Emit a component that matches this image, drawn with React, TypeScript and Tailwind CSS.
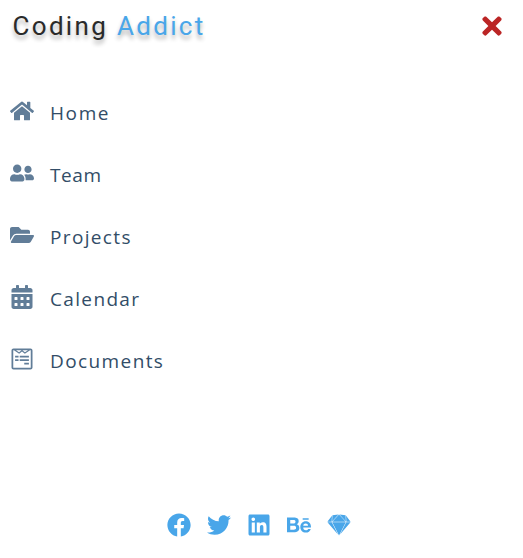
import React from 'react';
import { FaTimes, FaHome, FaUserFriends, FaFolderOpen, FaCalendarAlt, FaWpforms, FaFacebook, FaTwitter, FaLinkedin, FaBehance, FaSketch } from 'react-icons/fa';

const links = [
  { text: 'Home', icon: <FaHome />, tracking: 'tracking-[1.6px]' },
  { text: 'Team', icon: <FaUserFriends />, tracking: 'tracking-[0.6px]' },
  { text: 'Projects', icon: <FaFolderOpen />, tracking: 'tracking-[1.35px]' },
  { text: 'Calendar', icon: <FaCalendarAlt />, tracking: 'tracking-[1.35px]' },
  { text: 'Documents', icon: <FaWpforms />, tracking: 'tracking-[1.4px]' },
];
const social = [FaFacebook, FaTwitter, FaLinkedin, FaBehance, FaSketch];

export default function App() {
  return (
    <aside className="grid h-screen w-full grid-rows-[auto_1fr_auto] bg-white">
      <header className="flex h-[82px] items-start justify-between pl-[12.5px] pr-[17px] pt-[8px]">
        <h1 className="whitespace-nowrap font-[Roboto,sans-serif] text-[26px] leading-[36px] tracking-[2.32px] text-[#2a2a2a] [text-shadow:0px_4px_4px_rgba(0,0,0,0.3)]">
          Coding <span className="text-[#49a6e9]">Addict</span>
        </h1>
        <button aria-label="Close" className="mt-[4px] text-[28px] text-[#bb2525]"><FaTimes /></button>
      </header>
      <ul>
        {links.map((l) => (
          <li key={l.text} className="flex h-[62px] items-center gap-4 pl-[10px]">
            <span className="pb-1 text-[24px] text-[#617d98]">{l.icon}</span>
            <span className={`font-['Open_Sans',sans-serif] text-[19px] leading-[28px] text-[#324d67] ${l.tracking}`}>{l.text}</span>
          </li>
        ))}
      </ul>
      <ul className="flex h-[45px] justify-center gap-4 pr-[5px] text-[24px] text-[#49a6e9]">
        {social.map((Icon, i) => <li key={i}><Icon /></li>)}
      </ul>
    </aside>
  );
}
